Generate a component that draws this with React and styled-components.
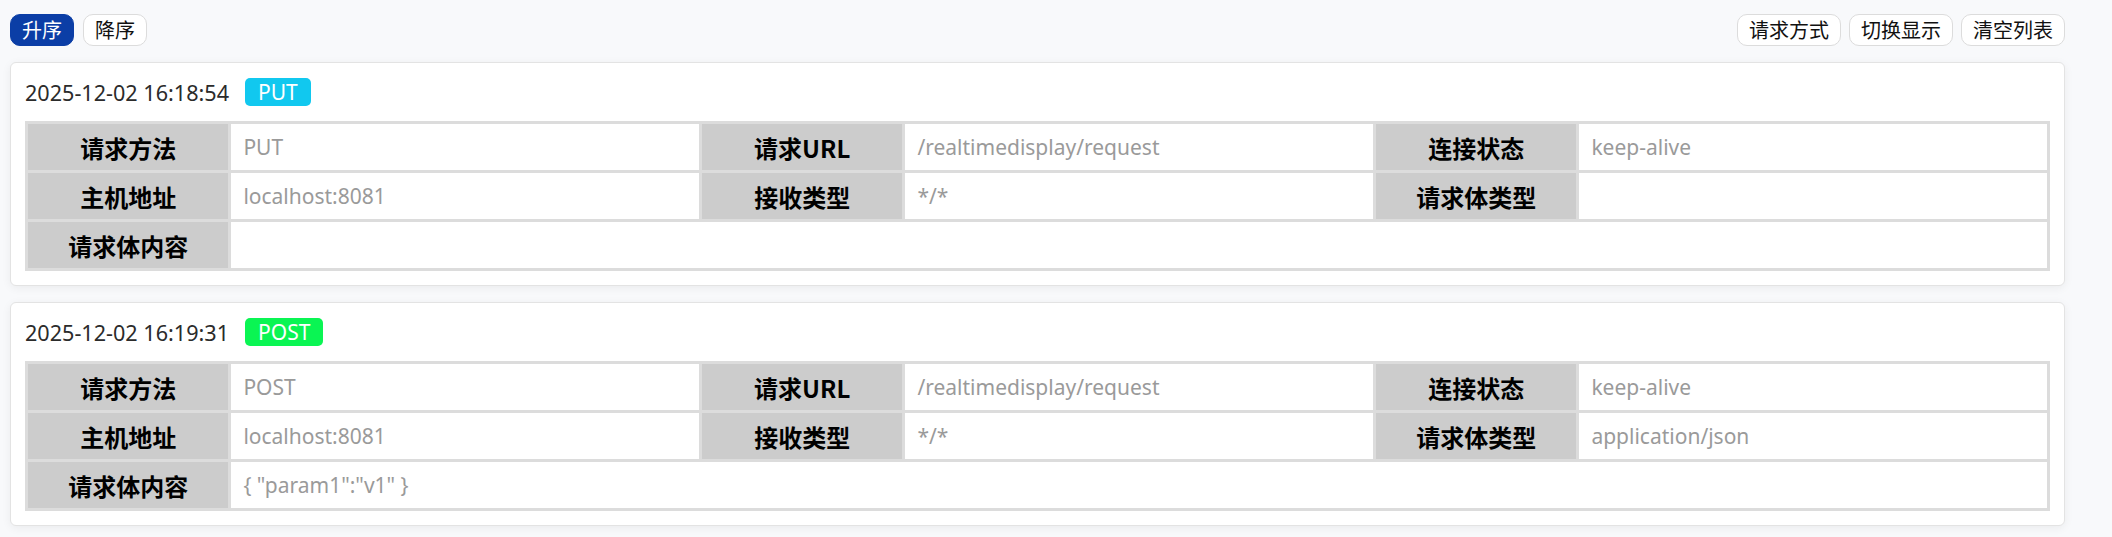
import React from "react";
import styled, { createGlobalStyle } from "styled-components";

const Global = createGlobalStyle`
  html, body { margin: 0; padding: 0; background: #f8f9fb; }
  body { font-family: "Noto Sans", "Noto Sans CJK SC", sans-serif; }
  * { box-sizing: border-box; }
`;

const Page = styled.div`
  padding: 14px 47px 12px 10px;
  display: flex;
  flex-direction: column;
  gap: 16px;
`;

const Toolbar = styled.div`
  display: flex;
  justify-content: space-between;
  align-items: center;
`;

const Group = styled.div`
  display: flex;
  gap: ${(p) => p.$gap || 8}px;
`;

const Btn = styled.button`
  height: 32px;
  padding: 0 11px;
  border-radius: 10px;
  border: 1px solid ${(p) => (p.$active ? "#0b3ea6" : "#dcdcdc")};
  background: ${(p) => (p.$active ? "#0b3ea6" : "#fff")};
  color: ${(p) => (p.$active ? "#fff" : "#111")};
  font-family: "Noto Sans CJK SC", sans-serif;
  font-size: 20px;
  line-height: 1;
  cursor: pointer;
`;

const Card = styled.div`
  background: #fff;
  border: 1px solid #e3e3e3;
  border-radius: 6px;
  box-shadow: 0 2px 10px rgba(0, 0, 0, 0.06);
  padding: 15px 14px 14px;
  display: flex;
  flex-direction: column;
  gap: 15px;
`;

const CardHead = styled.div`
  display: flex;
  align-items: center;
  gap: 16px;
  height: 28px;
`;

const Time = styled.span`
  font-family: "Noto Sans", sans-serif;
  font-size: 21.6px;
  color: #2b2b2b;
`;

const Badge = styled.span`
  height: 28px;
  padding: 0 13px;
  border-radius: 5px;
  background: ${(p) => p.$color};
  color: #fff;
  font-family: "Noto Sans", sans-serif;
  font-size: 21px;
  display: flex;
  align-items: center;
`;

const Table = styled.div`
  display: grid;
  grid-template-columns: 3fr 7fr 3fr 7fr 3fr 7fr;
  grid-auto-rows: 46px;
  gap: 3px;
  padding: 3px;
  background: #dcdcdc;
`;

const Th = styled.div`
  background: #cccccc;
  color: #000;
  font-family: "Noto Sans CJK SC", sans-serif;
  font-weight: 700;
  font-size: 24px;
  display: flex;
  align-items: center;
  justify-content: center;
`;

const Td = styled.div`
  background: #fff;
  color: #9a9a9a;
  font-family: "Noto Sans", "Noto Sans CJK SC", sans-serif;
  font-size: 21px;
  display: flex;
  align-items: center;
  padding-left: 12px;
  grid-column: ${(p) => (p.$span ? `span ${p.$span}` : "auto")};
`;

const data = [
  {
    time: "2025-12-02 16:18:54",
    method: "PUT",
    color: "#11c8ef",
    url: "/realtimedisplay/request",
    conn: "keep-alive",
    host: "localhost:8081",
    accept: "*/*",
    ctype: "",
    body: "",
  },
  {
    time: "2025-12-02 16:19:31",
    method: "POST",
    color: "#0af553",
    url: "/realtimedisplay/request",
    conn: "keep-alive",
    host: "localhost:8081",
    accept: "*/*",
    ctype: "application/json",
    body: '{ "param1":"v1" }',
  },
];

export default function App() {
  return (
    <>
      <Global />
      <Page>
        <Toolbar>
          <Group $gap={9}>
            <Btn $active>升序</Btn>
            <Btn>降序</Btn>
          </Group>
          <Group>
            <Btn>请求方式</Btn>
            <Btn>切换显示</Btn>
            <Btn>清空列表</Btn>
          </Group>
        </Toolbar>
        {data.map((d) => (
          <Card key={d.time}>
            <CardHead>
              <Time>{d.time}</Time>
              <Badge $color={d.color}>{d.method}</Badge>
            </CardHead>
            <Table>
              <Th>请求方法</Th>
              <Td>{d.method}</Td>
              <Th>请求URL</Th>
              <Td>{d.url}</Td>
              <Th>连接状态</Th>
              <Td>{d.conn}</Td>
              <Th>主机地址</Th>
              <Td>{d.host}</Td>
              <Th>接收类型</Th>
              <Td>{d.accept}</Td>
              <Th>请求体类型</Th>
              <Td>{d.ctype}</Td>
              <Th>请求体内容</Th>
              <Td $span={5}>{d.body}</Td>
            </Table>
          </Card>
        ))}
      </Page>
    </>
  );
}
